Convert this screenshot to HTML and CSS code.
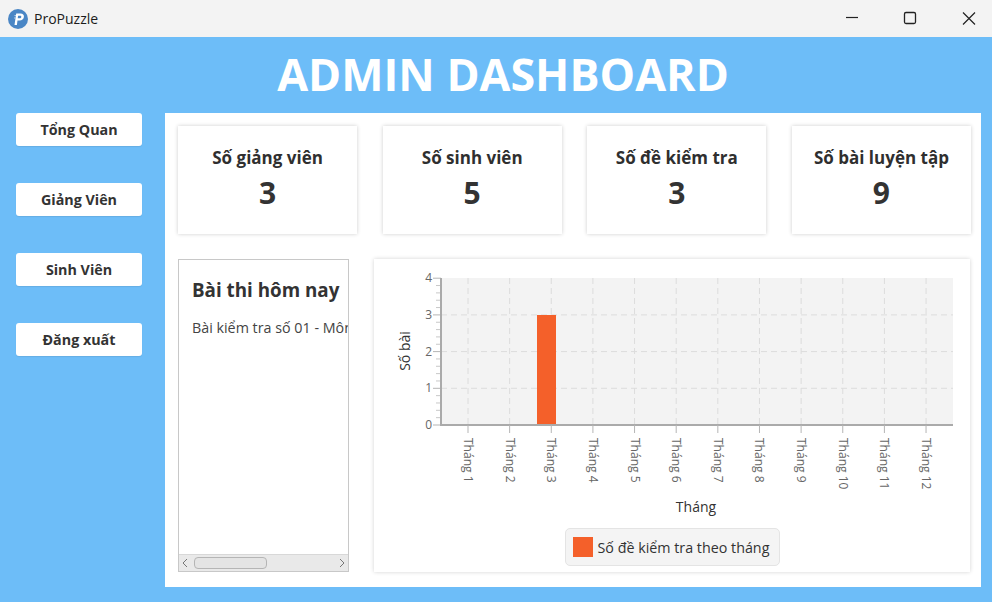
FILE: index.html
```html
<!DOCTYPE html>
<html lang="vi">
<head>
<meta charset="utf-8">
<title>ProPuzzle</title>
<link rel="stylesheet" href="styles.css">
</head>
<body>
<div class="window">
  <header class="titlebar">
    <svg class="app-icon" viewBox="0 0 20 20" width="20" height="20"><circle cx="10" cy="10" r="10" fill="#4a86c5"/><path d="M6.500 16L8.200 4.500h4.300c2.300 0 3.700 1.300 3.400 3.400-.3 2.200-2 3.500-4.300 3.500h-2.100L8.900 16z" fill="#fff"/><path d="M10.100 6.800l-.4 2.500h1.900c1 0 1.600-.5 1.700-1.300.1-.8-.4-1.200-1.300-1.200z" fill="#4a86c5"/><path d="M6.600 6.500h1.200M6.200 9h1.200" stroke="#cfe0f2" fill="none"/></svg>
    <span class="app-name">ProPuzzle</span>
    <div class="controls">
      <svg class="ctl" viewBox="0 0 46 37" width="46" height="37"><path d="M16 17.500h12" stroke="#222" stroke-width="1.200" fill="none"/></svg>
      <svg class="ctl" viewBox="0 0 46 37" width="46" height="37"><rect x="16.500" y="12.500" width="11" height="11" rx="1.500" stroke="#222" stroke-width="1.300" fill="none"/></svg>
      <svg class="ctl" viewBox="0 0 46 37" width="46" height="37"><path d="M17 12.500l12 12M29 12.500l-12 12" stroke="#222" stroke-width="1.200" fill="none"/></svg>
    </div>
  </header>

  <main class="stage">
    <h1 class="title">ADMIN DASHBOARD</h1>
    <div class="body">
      <nav class="sidebar">
        <button class="nav-btn">Tổng Quan</button>
        <button class="nav-btn">Giảng Viên</button>
        <button class="nav-btn">Sinh Viên</button>
        <button class="nav-btn">Đăng xuất</button>
      </nav>
      <section class="panel">
        <div class="stats">
          <div class="stat"><div class="stat-label">Số giảng viên</div><div class="stat-value">3</div></div>
          <div class="stat"><div class="stat-label">Số sinh viên</div><div class="stat-value">5</div></div>
          <div class="stat"><div class="stat-label">Số đề kiểm tra</div><div class="stat-value">3</div></div>
          <div class="stat"><div class="stat-label">Số bài luyện tập</div><div class="stat-value">9</div></div>
        </div>
        <div class="lower">
          <div class="exam-list">
            <div class="exam-view">
              <h2 class="exam-title">Bài thi hôm nay</h2>
              <p class="exam-item">Bài kiểm tra số 01 - Môn Lập trình hướng đối tượng</p>
            </div>
            <div class="hscroll">
              <svg class="arrow" viewBox="0 0 6 10" width="6" height="10"><path d="M5 1L1 5l4 4" stroke="#777" fill="none"/></svg>
              <div class="track"><div class="thumb"></div></div>
              <svg class="arrow" viewBox="0 0 6 10" width="6" height="10"><path d="M1 1l4 4-4 4" stroke="#777" fill="none"/></svg>
            </div>
          </div>
          <div class="chart-card">
            <svg class="chart" id="chart" width="596" height="269" viewBox="0 0 596 269"></svg>
            <div class="legend"><span class="swatch"></span><span class="legend-text">Số đề kiểm tra theo tháng</span></div>
          </div>
        </div>
      </section>
    </div>
  </main>
</div>
<script src="chart.js"></script>
</body>
</html>
```
FILE: styles.css
```css
* { box-sizing: border-box; }
html, body { margin: 0; height: 100%; }
body { font-family: "Open Sans", "Noto Sans", sans-serif; color: #333; }
.window { width: 992px; height: 602px; display: flex; flex-direction: column; overflow: hidden; background: #6dbdf8; }

.titlebar { height: 37px; flex: none; background: #f3f3f3; display: flex; align-items: center; padding-left: 8px; }
.app-icon { flex: none; }
.app-name { margin-left: 6px; font-size: 14px; color: #1c1c1c; }
.controls { margin-left: auto; display: flex; gap: 12px; }
.ctl { display: block; }

.stage { flex: 1; display: flex; flex-direction: column; min-height: 0; }
.title { margin: 0; height: 76px; line-height: 74px; text-align: center; font-size: 44.800px; font-weight: 700; color: #fff; padding-left: 14px; }

.body { flex: 1; display: flex; padding: 0 11px 15px 16px; gap: 23px; min-height: 0; }
.sidebar { width: 126px; flex: none; display: flex; flex-direction: column; gap: 37px; }
.nav-btn { height: 33px; border: 0; border-radius: 3px; background: #fff; font: 700 14.300px "Open Sans", sans-serif; color: #333; padding: 0; box-shadow: 0 1px 1px rgba(0,0,0,.08); }

.panel { flex: 1; background: #fff; padding: 13px 10px 15px 13px; display: flex; flex-direction: column; gap: 25px; min-width: 0; }
.stats { display: flex; gap: 25.500px; height: 108px; flex: none; }
.stat { flex: 1; background: #fff; box-shadow: 0 0 4px rgba(0,0,0,.2); display: flex; flex-direction: column; align-items: center; padding-top: 20px; }
.stat-label { font-size: 17px; font-weight: 700; line-height: 24px; color: #2f2f2f; }
.stat-value { font-size: 30px; font-weight: 700; line-height: 40px; color: #333; margin-top: 3px; }

.lower { flex: 1; display: flex; gap: 25px; min-height: 0; }
.exam-list { width: 171px; flex: none; border: 1px solid #c8c8c8; display: flex; flex-direction: column; background: #fff; }
.exam-view { flex: 1; overflow: hidden; padding: 16px 0 0 13px; white-space: nowrap; }
.exam-title { margin: 0; font-size: 18.800px; line-height: 28px; font-weight: 700; color: #333; }
.exam-item { margin: 14px 0 0; font-size: 14.300px; line-height: 20px; color: #444; }
.hscroll { height: 17px; flex: none; background: #e9e9e9; border-top: 1px solid #d8d8d8; display: flex; align-items: center; padding: 0 3px; gap: 6px; }
.arrow { flex: none; }
.track { flex: 1; height: 100%; padding: 2px 0; }
.thumb { width: 73px; height: 12px; border: 1px solid #b5b5b5; border-radius: 4px; background: #e4e4e4; }

.chart-card { width: 596px; flex: none; background: #fff; box-shadow: 0 0 4px rgba(0,0,0,.18); display: flex; flex-direction: column; align-items: center; }
.chart { display: block; flex: none; font-family: "Open Sans", sans-serif; }
.legend { width: 215px; height: 38px; flex: none; background: #f4f4f4; border: 1px solid #e4e4e4; border-radius: 5px; display: flex; align-items: center; padding-left: 7px; gap: 5px; }
.swatch { width: 20px; height: 20px; background: #f4602a; flex: none; }
.legend-text { font-size: 14.300px; color: #333; white-space: nowrap; }

.plot-bg { fill: #f3f3f3; }
.grid { stroke: #dcdcdc; stroke-dasharray: 6 4; fill: none; }
.axis { stroke: #aaa; stroke-width: 2; fill: none; }
.tick { stroke: #b5b5b5; fill: none; }
.minor { stroke: #c8c8c8; fill: none; }
.bar { fill: #f4602a; }
.y-num { font-size: 12px; fill: #666; text-anchor: end; }
.x-num { font-size: 12px; fill: #666; }
.axis-label { font-size: 14px; fill: #333; text-anchor: middle; }
```
FILE: chart.js
```js
(function () {
  var svg = document.getElementById('chart');
  var NS = 'http://www.w3.org/2000/svg';
  var ox = 374, oy = 259;
  function el(name, attrs, text) {
    var n = document.createElementNS(NS, name);
    for (var k in attrs) n.setAttribute(k, attrs[k]);
    if (text !== undefined) n.textContent = text;
    svg.appendChild(n);
    return n;
  }
  var left = 441 - ox, right = 953 - ox, top = 278 - oy, bottom = 425 - oy;
  el('rect', { class: 'plot-bg', x: left, y: top, width: right - left, height: bottom - top });
  var i, y, x;
  for (i = 0; i < 12; i++) {
    x = 468 - ox + 41.64 * i;
    el('line', { class: 'grid', x1: x, x2: x, y1: top, y2: bottom });
  }
  for (i = 1; i < 4; i++) {
    y = bottom - i * 36.7;
    el('line', { class: 'grid', x1: left, x2: right, y1: y, y2: y });
  }
  el('rect', { class: 'bar', x: 537 - ox, y: 315 - oy, width: 19, height: 110 });
  for (i = 0; i <= 4; i++) {
    y = bottom - i * 36.7;
    el('line', { class: 'tick', x1: left - 8, x2: left, y1: y, y2: y });
    el('text', { class: 'y-num', x: left - 9, y: y + 4 }, String(i));
    if (i < 4) {
      for (var m = 1; m < 5; m++) {
        var my = y - m * 7.34;
        el('line', { class: 'minor', x1: left - 5, x2: left, y1: my, y2: my });
      }
    }
  }
  el('line', { class: 'axis', x1: left, x2: left, y1: top, y2: bottom + 1 });
  el('line', { class: 'axis', x1: left, x2: right, y1: bottom, y2: bottom });
  for (i = 0; i < 12; i++) {
    x = 468 - ox + 41.64 * i;
    el('line', { class: 'tick', x1: x, x2: x, y1: bottom, y2: bottom + 8 });
    el('text', { class: 'x-num', transform: 'translate(' + (x - 4) + ' ' + (bottom + 13) + ') rotate(90)' }, 'Tháng ' + (i + 1));
  }
  el('text', { class: 'axis-label', transform: 'translate(' + (410 - ox) + ' ' + (351 - oy) + ') rotate(-90)' }, 'Số bài');
  el('text', { class: 'axis-label', x: 696 - ox, y: 512 - oy }, 'Tháng');
})();
```
